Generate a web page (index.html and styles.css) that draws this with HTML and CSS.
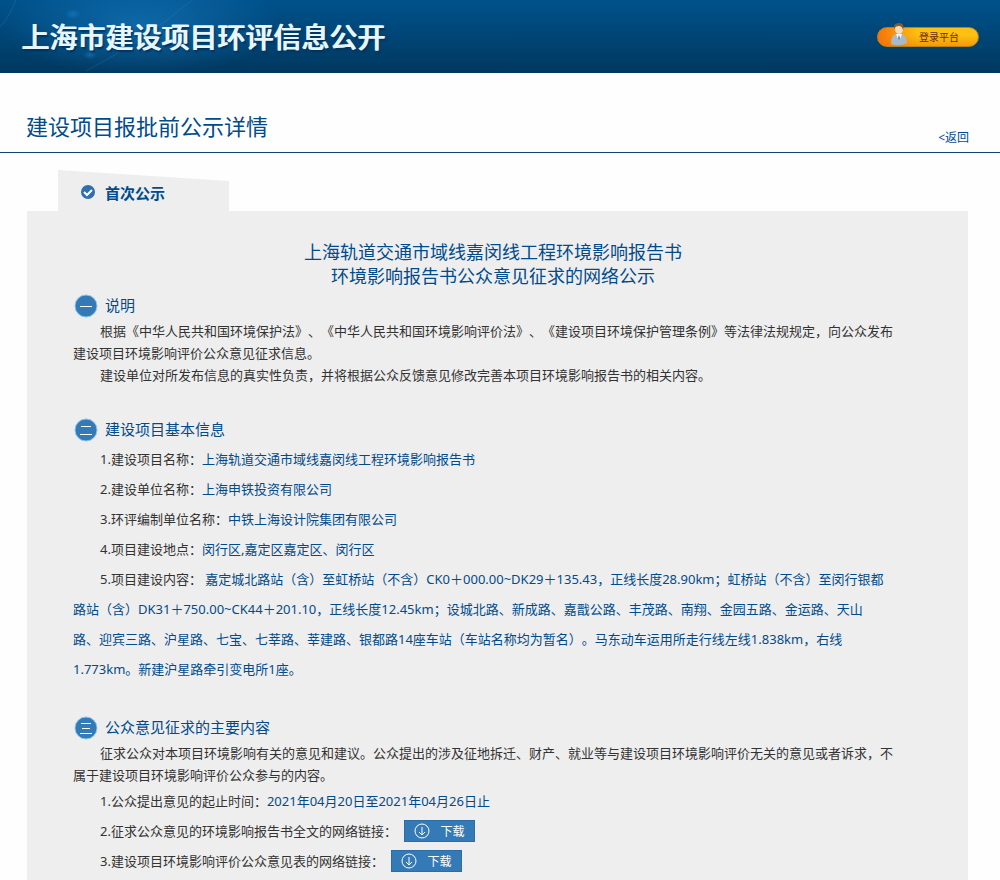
FILE: index.html
```html
<!DOCTYPE html>
<html lang="zh-CN">
<head>
    <meta charset="UTF-8">
    <meta name="viewport" content="width=device-width, initial-scale=1.0">
    <title>上海市建设项目环评信息公开</title>
    <link rel="stylesheet" href="styles.css">
</head>
<body>
    <header class="header">
        <svg class="header-bg" viewBox="0 0 1000 73" preserveAspectRatio="xMinYMin slice" aria-hidden="true">
            <defs>
                <radialGradient id="glow">
                    <stop offset="0" stop-color="#1c86d0" stop-opacity="0.5"/>
                    <stop offset="1" stop-color="#1c86d0" stop-opacity="0"/>
                </radialGradient>
            </defs>
            <ellipse cx="140" cy="24" rx="140" ry="52" fill="url(#glow)"/>
            <ellipse cx="73" cy="14" rx="8" ry="5" fill="url(#glow)"/>
            <ellipse cx="90" cy="55" rx="7" ry="4" fill="url(#glow)"/>
            <path d="M0 27Q10 16 16 0M86 71Q145 40 192 0" fill="none" stroke="#4a9bd6" stroke-opacity="0.2"/>
        </svg>
        <h1 class="site-title">上海市建设项目环评信息公开</h1>
        <button type="button" class="login">
            <svg class="login-icon" viewBox="0 0 18 24" aria-hidden="true">
                <path d="M1 22Q1 13 6 12L12 12Q17 14 17 21Q9 25 1 22Z" fill="#a9bac6"/>
                <path d="M6 12L9 20L12 12Z" fill="#f4f6f8"/>
                <path d="M9 13L8 16L9 20L10 16Z" fill="#5c7f9c"/>
                <ellipse cx="9" cy="7" rx="4" ry="5" fill="#f6dcb8"/>
                <path d="M4 7Q3 1 9 1Q15 1 13 8Q12 4 9 4Q5 4 4 7Z" fill="#8a5a30"/>
            </svg>
            登录平台
        </button>
    </header>

    <div class="page-head">
        <h2 class="page-title">建设项目报批前公示详情</h2>
        <a class="back" href="#">&lt;返回</a>
    </div>

    <main class="main">
        <div class="tab">
            <svg class="tab-icon" viewBox="0 0 14 14" aria-hidden="true">
                <circle cx="7" cy="7" r="7" fill="#2f6fad"/>
                <path d="M3 7L6 10L11 5" fill="none" stroke="#fff" stroke-width="2"/>
            </svg>
            首次公示
        </div>
        <div class="panel">
            <h3 class="notice-title">上海轨道交通市域线嘉闵线工程环境影响报告书<br>环境影响报告书公众意见征求的网络公示</h3>

            <section class="section">
                <h4 class="section-title">
                    <svg class="num" viewBox="0 0 24 24" aria-hidden="true">
                        <circle cx="12" cy="12" r="11"/>
                        <path d="M6 12.5H18"/>
                    </svg>
                    说明
                </h4>
                <p class="text">根据《中华人民共和国环境保护法》、《中华人民共和国环境影响评价法》、《建设项目环境保护管理条例》等法律法规规定，向公众发布建设项目环境影响评价公众意见征求信息。</p>
                <p class="text">建设单位对所发布信息的真实性负责，并将根据公众反馈意见修改完善本项目环境影响报告书的相关内容。</p>
            </section>

            <section class="section">
                <h4 class="section-title">
                    <svg class="num" viewBox="0 0 24 24" aria-hidden="true">
                        <circle cx="12" cy="12" r="11"/>
                        <path d="M7 8.5H17M6 16.5H18"/>
                    </svg>
                    建设项目基本信息
                </h4>
                <p class="item">1.建设项目名称：<span class="value">上海轨道交通市域线嘉闵线工程环境影响报告书</span></p>
                <p class="item">2.建设单位名称：<span class="value">上海申铁投资有限公司</span></p>
                <p class="item">3.环评编制单位名称：<span class="value">中铁上海设计院集团有限公司</span></p>
                <p class="item">4.项目建设地点：<span class="value">闵行区,嘉定区嘉定区、闵行区</span></p>
                <p class="item">5.项目建设内容： <span class="value">嘉定城北路站（含）至虹桥站（不含）CK0＋000.00~DK29＋135.43，正线长度28.90km；虹桥站（不含）至闵行银都路站（含）DK31＋750.00~CK44＋201.10，正线长度12.45km；设城北路、新成路、嘉戬公路、丰茂路、南翔、金园五路、金运路、天山<br>路、迎宾三路、沪星路、七宝、七莘路、莘建路、银都路14座车站（车站名称均为暂名）。马东动车运用所走行线左线1.838km，右线<br>1.773km。新建沪星路牵引变电所1座。</span></p>
            </section>

            <section class="section">
                <h4 class="section-title">
                    <svg class="num" viewBox="0 0 24 24" aria-hidden="true">
                        <circle cx="12" cy="12" r="11"/>
                        <path d="M7 7.5H17M8 12.5H16M6 17.5H18"/>
                    </svg>
                    公众意见征求的主要内容
                </h4>
                <p class="text">征求公众对本项目环境影响有关的意见和建议。公众提出的涉及征地拆迁、财产、就业等与建设项目环境影响评价无关的意见或者诉求，不属于建设项目环境影响评价公众参与的内容。</p>
                <p class="item">1.公众提出意见的起止时间：<span class="value">2021年04月20日至2021年04月26日止</span></p>
                <div class="item item-row">
                    2.征求公众意见的环境影响报告书全文的网络链接：
                    <button type="button" class="download">
                        <svg class="download-icon" viewBox="0 0 16 16" aria-hidden="true">
                            <circle cx="8" cy="8" r="7"/>
                            <path d="M8 4V12M5 9L8 12L11 9"/>
                        </svg>
                        下载
                    </button>
                </div>
                <div class="item item-row">
                    3.建设项目环境影响评价公众意见表的网络链接：
                    <button type="button" class="download">
                        <svg class="download-icon" viewBox="0 0 16 16" aria-hidden="true">
                            <circle cx="8" cy="8" r="7"/>
                            <path d="M8 4V12M5 9L8 12L11 9"/>
                        </svg>
                        下载
                    </button>
                </div>
            </section>
        </div>
    </main>
</body>
</html>
```
FILE: styles.css
```css
* {
    box-sizing: border-box;
    margin: 0;
    padding: 0;
}
body {
    display: flex;
    flex-direction: column;
    min-height: 100vh;
    background-color: #fefefe;
    color: #333;
    font-family: "Noto Sans", "Noto Sans CJK SC", sans-serif;
    font-size: 13px;
    text-spacing-trim: space-all;
}
h1, h2, h3, h4 {
    font-weight: normal;
}

/* header */
.header {
    position: relative;
    display: flex;
    align-items: center;
    justify-content: space-between;
    height: 73px;
    padding: 0 21px;
    background: linear-gradient(to bottom, #00528c, #00385f);
}
.header-bg {
    position: absolute;
    top: 0;
    left: 0;
    width: 100%;
    height: 100%;
}
.site-title {
    position: relative;
    font-size: 28px;
    font-weight: 500;
    line-height: 70px;
    color: #e6f6ff;
    text-shadow: 1px 0 0 #e6f6ff, 2px 2px 2px #00305a;
}
.login {
    position: relative;
    width: 102px;
    height: 20px;
    padding-left: 22px;
    border: 1px solid #b9801c;
    border-radius: 10px;
    background: linear-gradient(to right, #f5730a, rgba(245, 115, 10, 0) 40%), linear-gradient(to bottom, #fdc010 40%, #f29a0c);
    color: #6b2a00;
    font-family: inherit;
    font-size: 10px;
    line-height: 18px;
    cursor: pointer;
}
.login-icon {
    position: absolute;
    left: 12px;
    bottom: 0;
    width: 18px;
    height: 24px;
}

/* page title */
.page-head {
    display: flex;
    align-items: flex-end;
    justify-content: space-between;
    height: 80px;
    padding: 0 31px 0 26px;
    border-bottom: 1px solid #0d4477;
    color: #004b8c;
}
.page-title {
    font-size: 22px;
    line-height: 52px;
}
.back {
    color: #004b8c;
    font-size: 12px;
    line-height: 28px;
    text-decoration: none;
}

/* content */
.main {
    display: flex;
    flex: 1;
    flex-direction: column;
    padding: 17px 32px 0 27px;
}
.tab {
    display: flex;
    align-items: center;
    gap: 10px;
    width: 171px;
    height: 41px;
    margin-left: 31px;
    padding: 3px 23px 0;
    background-color: #eee;
    clip-path: polygon(0 0, 100% 11px, 100% 100%, 0 100%);
    color: #004b8c;
    font-size: 15px;
    font-weight: bold;
}
.tab-icon {
    width: 14px;
    height: 14px;
}
.panel {
    flex: 1;
    padding: 29px 55px 4px 46px;
    background-color: #eee;
}
.notice-title {
    margin-bottom: 6px;
    color: #004b8c;
    font-size: 18px;
    line-height: 24px;
    text-align: center;
}
.section {
    margin-bottom: 32px;
    padding-right: 20px;
}
.section:last-child {
    margin-bottom: 0;
}
.section-title {
    display: flex;
    gap: 7px;
    height: 24px;
    margin: 0 0 2px 1px;
    color: #004b8c;
    font-size: 15px;
    line-height: 22px;
}
.num {
    width: 24px;
    height: 24px;
    fill: #337ab7;
    stroke: #8cc8ea;
}
.num path {
    stroke: #fff;
}
.text {
    line-height: 22px;
    text-indent: 27px;
}
.item {
    line-height: 30px;
    text-indent: 27px;
}
.item-row {
    display: flex;
    align-items: center;
    gap: 7px;
}
.value {
    color: #004b8c;
}
.download {
    display: flex;
    align-items: center;
    justify-content: center;
    gap: 10px;
    width: 71px;
    height: 22px;
    border: 1px solid #2e6da4;
    background-color: #337ab7;
    color: #fff;
    font-family: inherit;
    font-size: 12px;
    cursor: pointer;
}
.download-icon {
    width: 16px;
    height: 16px;
    fill: none;
    stroke: #fff;
}
```
